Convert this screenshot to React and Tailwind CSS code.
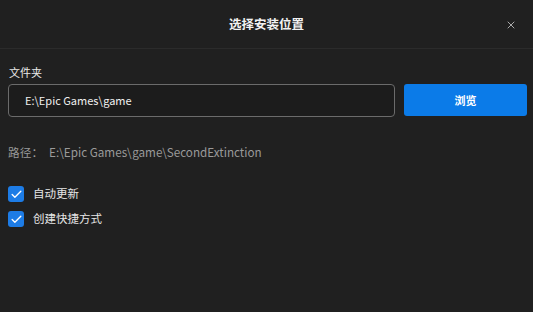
import { Check, X } from 'lucide-react'

const font = { fontFamily: '"Noto Sans CJK SC", "Noto Sans", sans-serif' }

function Option({ label }) {
  return (
    <label className="flex items-center gap-[9px] h-[17px]">
      <span className="w-[16px] h-[16px] rounded-[3px] bg-[#1d7ce6] flex items-center justify-center">
        <Check size={13} strokeWidth={2.5} className="text-white" />
      </span>
      <span className="text-[11.5px] text-[#e6e6e6]">{label}</span>
    </label>
  )
}

export default function App() {
  return (
    <div className="w-[533px] h-[312px] bg-[#202020] text-white overflow-hidden" style={font}>
      {/* Header */}
      <div className="relative h-[49px] flex items-center justify-center border-b border-[#2b2b2b]">
        <h1 className="text-[12.5px] font-bold text-[#f2f2f2] mt-[1px]">选择安装位置</h1>
        <button className="absolute right-[16px] top-[19px] text-[#cfcfcf]">
          <X size={12} strokeWidth={1.6} />
        </button>
      </div>

      <div className="pl-[8px] pr-[6px] pt-[16px]">
        <div className="text-[11px] text-[#e8e8e8] leading-[14px] mb-[5px] pl-[1px]">文件夹</div>
        <div className="flex gap-[9px]">
          <div className="w-[387px] h-[33px] rounded-[4px] border border-[#6b6b6b] bg-[#1c1c1c] flex items-center pl-[16px] text-[11px] text-[#f0f0f0]">
            E:\Epic Games\game
          </div>
          <button className="w-[123px] h-[32px] rounded-[3px] bg-[#0b7be8] text-[11px] font-bold text-white">
            浏览
          </button>
        </div>

        <div className="mt-[26px] text-[11.7px] text-[#9a9a9a] flex items-center gap-[6px]">
          <span>路径：</span>
          <span>E:\Epic Games\game\SecondExtinction</span>
        </div>

        <div className="mt-[25px] flex flex-col gap-[8px]">
          <Option label="自动更新" />
          <Option label="创建快捷方式" />
        </div>
      </div>
    </div>
  )
}
